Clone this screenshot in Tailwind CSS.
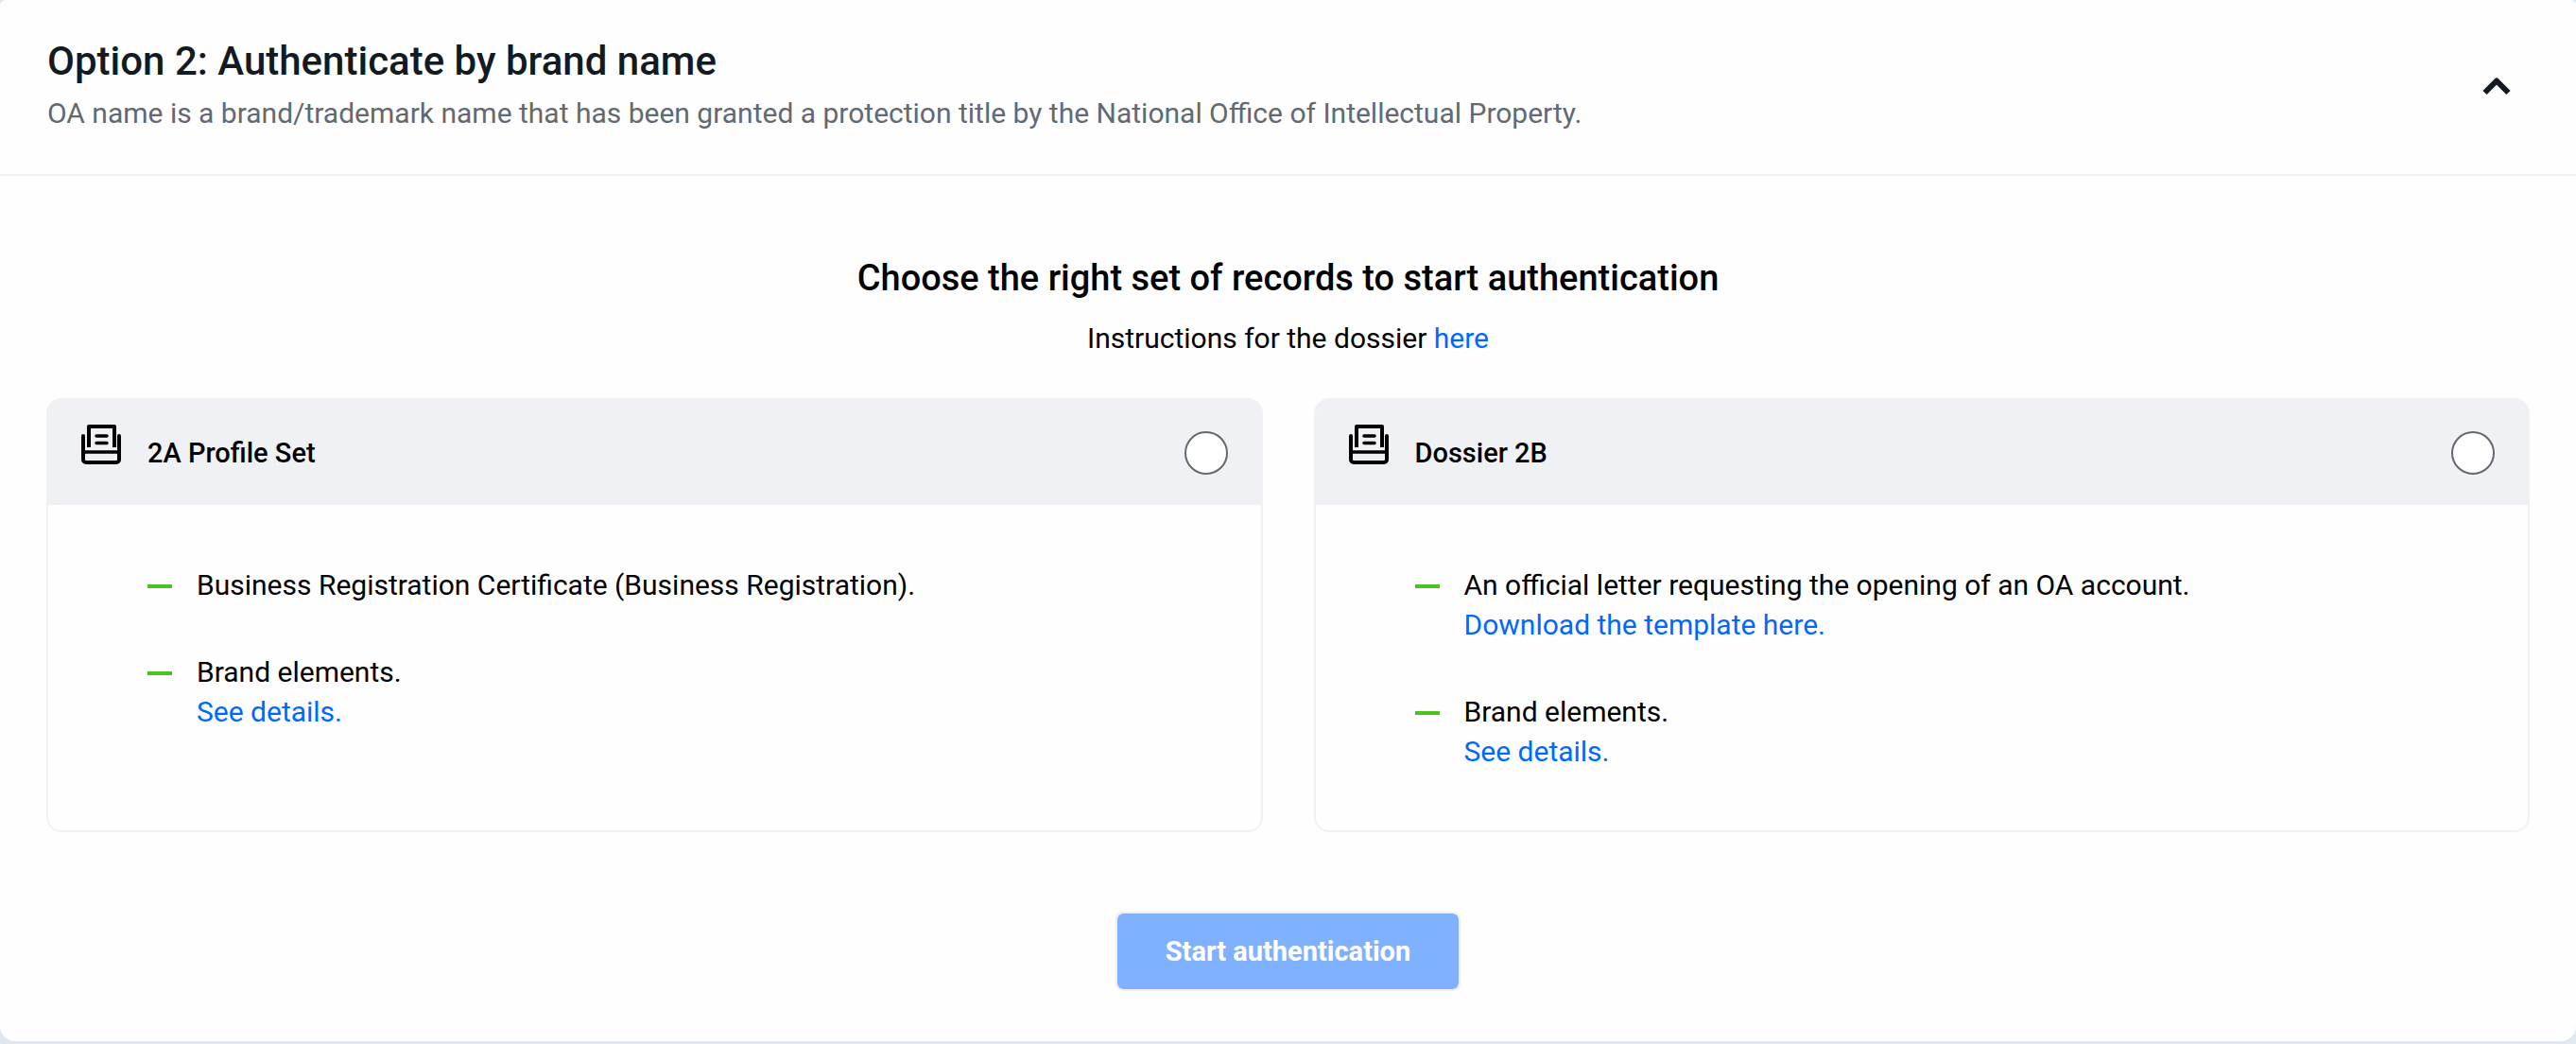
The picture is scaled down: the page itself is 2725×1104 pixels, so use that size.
<!DOCTYPE html>
<html lang="en">
<head>
  <meta charset="UTF-8">
  <meta name="viewport" content="width=device-width, initial-scale=1.0">
  <title>Authenticate by brand name</title>
  <script src="https://cdn.jsdelivr.net/npm/@tailwindcss/browser@4"></script>
</head>
<body class="bg-[#dfe7f0] font-[Roboto,sans-serif] text-[30px] leading-[42px] text-black">
  <section class="bg-[#fefefe] rounded-t-md rounded-b-2xl">

    <!-- Header -->
    <header class="flex items-center justify-between pl-[50px] pr-[68px] pt-[37px] pb-[43px] border-b-2 border-[#f0f1f5]">
      <div>
        <h1 class="text-[42px] leading-[56px] font-medium text-[#141a21]">Option 2: Authenticate by brand name</h1>
        <p class="mt-1.5 text-[#626972]">OA name is a brand/trademark name that has been granted a protection title by the National Office of Intellectual Property.</p>
      </div>
      <button type="button" aria-label="Collapse" class="mt-1 text-[#141a21]">
        <svg class="w-8 h-8" viewBox="0 0 32 32" fill="none" stroke="currentColor" stroke-width="6" stroke-linejoin="round">
          <path d="M3.500 23 16 10.500 28.500 23"/>
        </svg>
      </button>
    </header>

    <form class="px-[49px] pt-20 pb-[53px]">
      <h2 class="text-[38px] leading-[56px] font-medium text-center">Choose the right set of records to start authentication</h2>
      <p class="mt-[15px] text-center">Instructions for the dossier <a href="#" class="text-[#0068ff]">here</a></p>

      <div class="grid grid-cols-2 gap-[54px] mt-[42px]">
        <!-- 2A -->
        <div class="border-2 border-[#f0f1f5] rounded-2xl">
          <label for="set-2a" class="flex items-center h-[111px] px-[35px] bg-[#f0f1f5] rounded-t-xl text-[29px] font-medium">
            <svg class="w-[42px] h-[42px] mb-[18px] mr-7" viewBox="0 0 42 42" fill="none" stroke="currentColor" stroke-width="4" stroke-linecap="round" stroke-linejoin="round">
              <path d="M2 12v25a3 3 0 0 0 3 3h32a3 3 0 0 0 3-3V12"/>
              <path d="M8 24V2h27v22" stroke-linecap="butt"/>
              <path d="M16 12h11M16 19.500h11M2 29h38" stroke-width="3.500"/>
            </svg>
            <span>2A Profile Set</span>
            <input type="radio" id="set-2a" name="dossier" value="2a" class="appearance-none ml-auto w-[46px] h-[46px] rounded-full border-2 border-[#65686c] bg-white">
          </label>
          <ul class="pl-[105px] pr-9 pt-16 pb-[62px] space-y-[50px]">
            <li class="flex gap-[26px]">
              <span class="w-[26px] h-1 mt-5 bg-[#4bc220]"></span>
              <p>Business Registration Certificate (Business Registration).</p>
            </li>
            <li class="flex gap-[26px]">
              <span class="w-[26px] h-1 mt-5 bg-[#4bc220]"></span>
              <p>Brand elements.<br><a href="#" class="text-[#0068ff]">See details.</a></p>
            </li>
          </ul>
        </div>

        <!-- 2B -->
        <div class="border-2 border-[#f0f1f5] rounded-2xl">
          <label for="set-2b" class="flex items-center h-[111px] px-[35px] bg-[#f0f1f5] rounded-t-xl text-[29px] font-medium">
            <svg class="w-[42px] h-[42px] mb-[18px] mr-7" viewBox="0 0 42 42" fill="none" stroke="currentColor" stroke-width="4" stroke-linecap="round" stroke-linejoin="round">
              <path d="M2 12v25a3 3 0 0 0 3 3h32a3 3 0 0 0 3-3V12"/>
              <path d="M8 24V2h27v22" stroke-linecap="butt"/>
              <path d="M16 12h11M16 19.500h11M2 29h38" stroke-width="3.500"/>
            </svg>
            <span>Dossier 2B</span>
            <input type="radio" id="set-2b" name="dossier" value="2b" class="appearance-none ml-auto w-[46px] h-[46px] rounded-full border-2 border-[#65686c] bg-white">
          </label>
          <ul class="pl-[105px] pr-9 pt-16 pb-[62px] space-y-[50px]">
            <li class="flex gap-[26px]">
              <span class="w-[26px] h-1 mt-5 bg-[#4bc220]"></span>
              <p>An official letter requesting the opening of an OA account.<br><a href="#" class="text-[#0068ff]">Download the template here.</a></p>
            </li>
            <li class="flex gap-[26px]">
              <span class="w-[26px] h-1 mt-5 bg-[#4bc220]"></span>
              <p>Brand elements.<br><a href="#" class="text-[#0068ff]">See details.</a></p>
            </li>
          </ul>
        </div>
      </div>

      <div class="flex justify-center mt-[84px]">
        <button type="submit" disabled class="h-[84px] px-[51px] rounded-lg border-2 border-[#f1efee] bg-[#7fb1ff] bg-clip-padding text-[29px] font-bold text-white">Start authentication</button>
      </div>
    </form>
  </section>
</body>
</html>
